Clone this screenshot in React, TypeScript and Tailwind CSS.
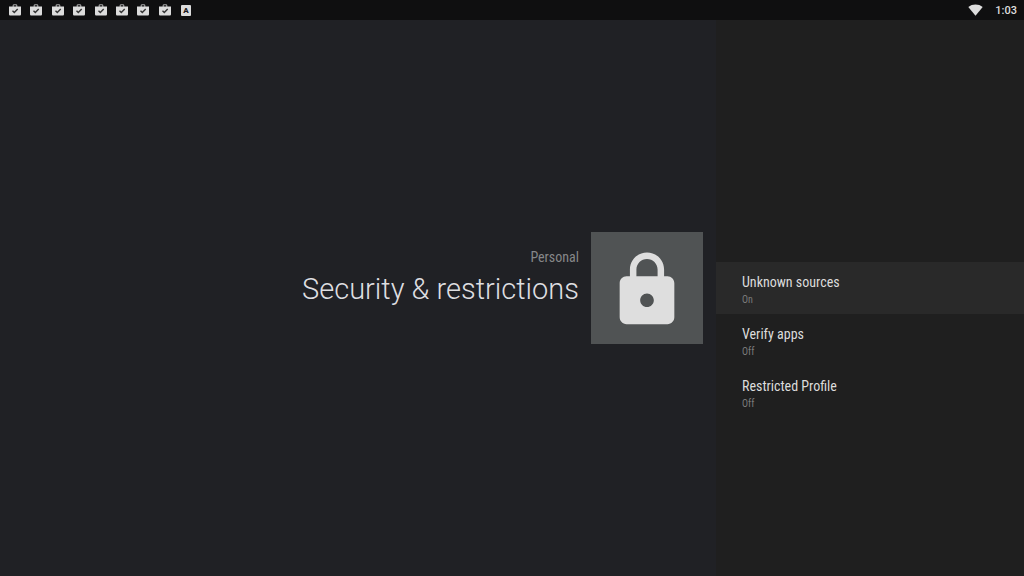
import React from "react";

interface Setting {
  name: string;
  value: string;
}

const settings: Setting[] = [
  { name: "Unknown sources", value: "On" },
  { name: "Verify apps", value: "Off" },
  { name: "Restricted Profile", value: "Off" },
];

const StoreIcon = () => (
  <svg viewBox="0 0 12 12" className="size-3 shrink-0" aria-hidden="true">
    <path
      d="M4.2 3V1.6c0-.5.4-.9.9-.9h1.8c.5 0 .9.4.9.9V3"
      fill="none"
      stroke="#a9a9a9"
      strokeWidth="1.1"
    />
    <path d="M0 2.4h12v7.8c0 .8-.6 1.4-1.4 1.4H1.4C.6 11.6 0 11 0 10.2z" fill="#dcdcdc" />
    <path d="M3.5 6.8l1.8 1.8 3.4-3.5" fill="none" stroke="#333" strokeWidth="1.4" />
  </svg>
);

const LetterIcon = () => (
  <span className="flex size-3 shrink-0 items-center justify-center pt-px">
    <span className="flex h-[11px] w-[10px] items-center justify-center rounded-[1px] bg-[#dcdcdc] text-[8px] leading-none font-black text-[#1a1a1a]">
      A
    </span>
  </span>
);

const WifiIcon = () => (
  <svg viewBox="0 0 15 12" className="h-3 w-[15px]" aria-hidden="true">
    <path d="M7.5 11.7L.3 2.9C2.4 1.2 4.9.4 7.5.4s5.1.8 7.2 2.5z" fill="#dedede" />
  </svg>
);

const LockIcon = () => (
  <svg viewBox="0 0 24 24" className="size-[82px]" fill="#dedede" aria-hidden="true">
    <path d="M18 8h-1V6c0-2.76-2.24-5-5-5S7 3.24 7 6v2H6c-1.1 0-2 .9-2 2v10c0 1.1.9 2 2 2h12c1.1 0 2-.9 2-2V10c0-1.1-.9-2-2-2zm-6 9c-1.1 0-2-.9-2-2s.9-2 2-2 2 .9 2 2-.9 2-2 2zm3.1-9H8.9V6c0-1.71 1.39-3.1 3.1-3.1 1.71 0 3.1 1.39 3.1 3.1v2z" />
  </svg>
);

const StatusBar = () => (
  <header className="flex h-5 items-center justify-between bg-[#0f0f10] pr-[7px] pl-[9px]">
    <div className="flex w-[183px] items-center justify-between">
      {Array.from({ length: 8 }, (_, i) => (
        <StoreIcon key={i} />
      ))}
      <LetterIcon />
    </div>
    <div className="flex items-center gap-3">
      <WifiIcon />
      <time className="pt-0.5 text-[11px] leading-4 font-medium text-[#dedede]">1:03</time>
    </div>
  </header>
);

const SettingsList = () => {
  const [selected, setSelected] = React.useState(0);

  return (
    <nav className="w-[308px] bg-[#1f1f1f] pt-[calc(50vh-46px)] font-['Roboto_Condensed',Roboto,sans-serif]">
      {settings.map((s, i) => (
        <button
          key={s.name}
          type="button"
          onClick={() => setSelected(i)}
          className={`flex h-[52px] w-full flex-col justify-center pt-1 pl-[26px] text-left ${
            i === selected ? "bg-[#292929]" : ""
          }`}
        >
          <span className="text-sm leading-5 text-[#dcdcdc]">{s.name}</span>
          <span className="text-[10px] leading-4 text-[#7b7b7b]">{s.value}</span>
        </button>
      ))}
    </nav>
  );
};

export default function App() {
  return (
    <div className="flex min-h-screen flex-col bg-[#202125] font-[Roboto,sans-serif]">
      <StatusBar />
      <div className="flex flex-1">
        <main className="flex flex-1 items-center justify-end gap-3 pr-[13px] pb-5">
          <div className="pb-[22px] text-right">
            <p className="font-['Roboto_Condensed',Roboto,sans-serif] text-sm leading-6 text-[#868789]">
              Personal
            </p>
            <h1 className="text-[29px] leading-10 font-light text-[#dedee0]">
              Security &amp; restrictions
            </h1>
          </div>
          <div className="flex size-28 items-center justify-center bg-[#505354] pt-1">
            <LockIcon />
          </div>
        </main>
        <SettingsList />
      </div>
    </div>
  );
}
